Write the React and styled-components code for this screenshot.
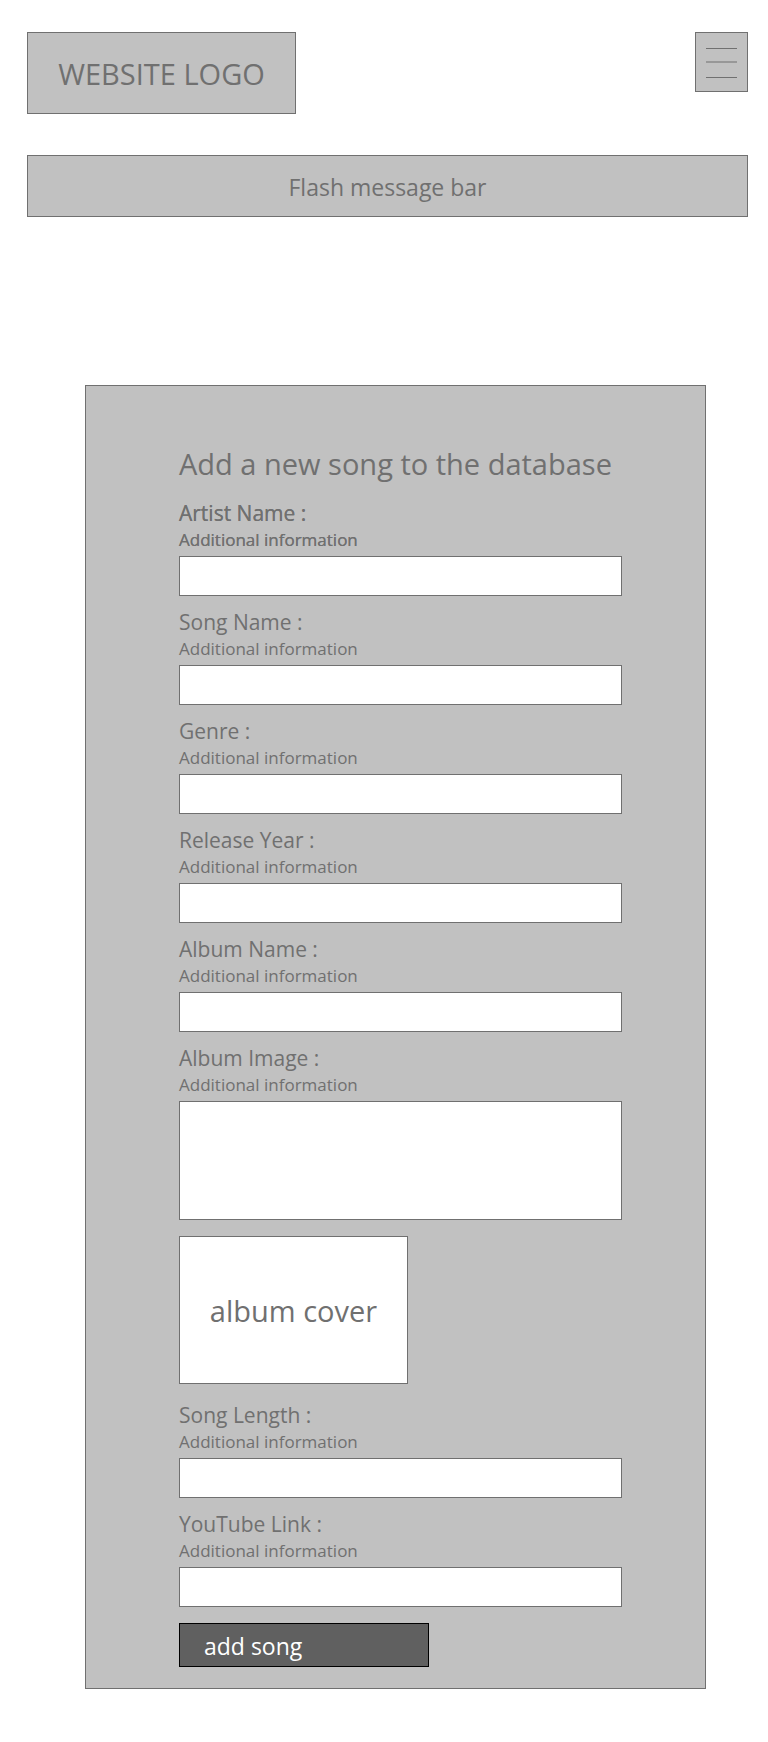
import React from "react";
import styled, { createGlobalStyle, css } from "styled-components";

const GlobalStyle = createGlobalStyle`
  *, *::before, *::after { box-sizing: border-box; }
  body {
    margin: 0;
    background: #ffffff;
    color: #707070;
    font-family: "Open Sans", "Noto Sans", sans-serif;
  }
`;

const outlined = css`
  border: 1px solid #707070;
  border-radius: 0;
`;

const Page = styled.div`
  padding: 32px 20px 53px 27px;
`;

const Header = styled.header`
  display: flex;
  justify-content: space-between;
  align-items: flex-start;
`;

const Logo = styled.a`
  ${outlined}
  display: flex;
  align-items: center;
  justify-content: center;
  width: 269px;
  height: 82px;
  background: #c1c1c1;
  color: inherit;
  font-size: 29px;
  text-decoration: none;
`;

const MenuButton = styled.button`
  ${outlined}
  width: 53px;
  height: 60px;
  padding: 0;
  background: #c1c1c1;
  cursor: pointer;

  svg { display: block; }
`;

const FlashBar = styled.div`
  ${outlined}
  display: flex;
  align-items: center;
  justify-content: center;
  height: 62px;
  margin-top: 41px;
  padding-top: 2px;
  background: #c1c1c1;
  font-size: 23px;
`;

const SongForm = styled.form`
  ${outlined}
  display: flex;
  flex-direction: column;
  align-items: stretch;
  gap: 16px;
  margin: 168px 42px 0 58px;
  padding: 60px 83px 21px 93px;
  background: #c1c1c1;
`;

const Title = styled.h1`
  margin: 0;
  font-size: 29px;
  font-weight: 400;
  line-height: 36px;
  white-space: nowrap;
`;

const FieldGroup = styled.div`
  display: flex;
  flex-direction: column;
  gap: 11px;
`;

const FieldRow = styled.div`
  display: flex;
  flex-direction: column;
  text-shadow: ${(p) => (p.$strong ? "0 0 0 #707070" : "none")};
`;

const Label = styled.label`
  font-size: 21px;
  line-height: 30px;
`;

const Hint = styled.span`
  margin-bottom: 4px;
  font-size: 17px;
  line-height: 24px;
`;

const TextInput = styled.input`
  ${outlined}
  width: 100%;
  height: ${(p) => (p.$tall ? 119 : 40)}px;
  margin: 0;
  padding: 8px;
  background: #ffffff;
  color: inherit;
  font: inherit;
  font-size: 17px;
  resize: none;
`;

const AlbumCover = styled.div`
  ${outlined}
  display: flex;
  align-items: center;
  justify-content: center;
  width: 229px;
  height: 148px;
  background: #ffffff;
  font-size: 29px;
`;

const SubmitButton = styled.button`
  align-self: flex-start;
  width: 250px;
  height: 44px;
  padding: 2px 24px 0;
  border: 1px solid #000000;
  border-radius: 0;
  background: #606060;
  color: #ffffff;
  font-family: inherit;
  font-size: 23px;
  line-height: 40px;
  text-align: left;
  cursor: pointer;
`;

const songFields = [
  { id: "artist-name", label: "Artist Name :", strong: true },
  { id: "song-name", label: "Song Name :" },
  { id: "genre", label: "Genre :" },
  { id: "release-year", label: "Release Year :" },
  { id: "album-name", label: "Album Name :" },
  { id: "album-image", label: "Album Image :", tall: true },
];

const mediaFields = [
  { id: "song-length", label: "Song Length :" },
  { id: "youtube-link", label: "YouTube Link :" },
];

function Field({ id, label, strong, tall }) {
  return (
    <FieldRow $strong={strong}>
      <Label htmlFor={id}>{label}</Label>
      <Hint id={`${id}-hint`}>Additional information</Hint>
      <TextInput
        as={tall ? "textarea" : "input"}
        id={id}
        name={id}
        aria-describedby={`${id}-hint`}
        $tall={tall}
      />
    </FieldRow>
  );
}

export default function App() {
  return (
    <>
      <GlobalStyle />
      <Page>
        <Header>
          <Logo href="#">WEBSITE LOGO</Logo>
          <MenuButton type="button" aria-label="Menu">
            <svg width="51" height="58" viewBox="0 0 51 58" aria-hidden="true">
              <rect x="10" y="15" width="31" height="1" fill="#707070" />
              <rect x="10" y="28" width="31" height="2" fill="#989898" />
              <rect x="10" y="44" width="31" height="1" fill="#707070" />
            </svg>
          </MenuButton>
        </Header>
        <FlashBar role="status">Flash message bar</FlashBar>
        <main>
          <SongForm onSubmit={(e) => e.preventDefault()}>
            <Title>Add a new song to the database</Title>
            <FieldGroup>
              {songFields.map((f) => (
                <Field key={f.id} {...f} />
              ))}
            </FieldGroup>
            <AlbumCover>album cover</AlbumCover>
            <FieldGroup>
              {mediaFields.map((f) => (
                <Field key={f.id} {...f} />
              ))}
            </FieldGroup>
            <SubmitButton type="submit">add song</SubmitButton>
          </SongForm>
        </main>
      </Page>
    </>
  );
}
